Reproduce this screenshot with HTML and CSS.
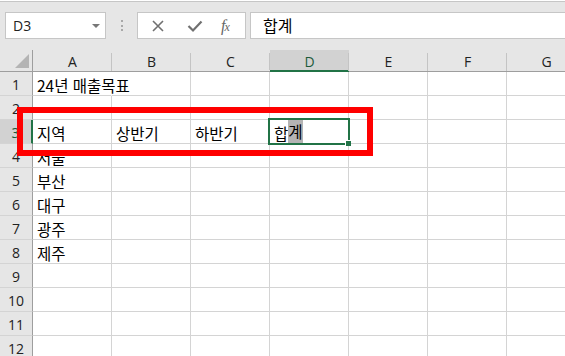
FILE: index.html
```html
<!DOCTYPE html>
<html lang="ko">
<head>
    <meta charset="UTF-8">
    <meta name="viewport" content="width=device-width, initial-scale=1.0">
    <title>24년 매출목표</title>
    <link rel="stylesheet" href="styles.css">
</head>
<body>
    <div class="formula-bar">
        <div class="name-box">
            <span>D3</span>
            <span class="drop"></span>
        </div>
        <div class="grip"><i></i><i></i><i></i></div>
        <div class="fx-buttons">
            <svg class="btn-icon" width="14" height="14" viewBox="0 0 14 14">
                <path d="M2 2 L12 12 M12 2 L2 12" stroke="#707070" stroke-width="1.6" fill="none"/>
            </svg>
            <svg class="btn-icon" width="16" height="14" viewBox="0 0 16 14">
                <path d="M1.5 7 L6 11.5 L14.5 2.5" stroke="#707070" stroke-width="2.2" fill="none"/>
            </svg>
            <span class="fx"><i>f</i><i class="x">x</i></span>
        </div>
        <div class="formula-input">합계</div>
    </div>

    <div class="sheet">
        <div class="row head">
            <div class="corner"><span class="tri"></span></div>
            <div class="ch">A</div>
            <div class="ch">B</div>
            <div class="ch">C</div>
            <div class="ch active">D</div>
            <div class="ch">E</div>
            <div class="ch">F</div>
            <div class="ch">G</div>
        </div>
        <div class="row">
            <div class="rh">1</div>
            <div class="cell spill">24년 매출목표</div>
            <div class="cell"></div><div class="cell"></div><div class="cell"></div>
            <div class="cell"></div><div class="cell"></div><div class="cell"></div>
        </div>
        <div class="row">
            <div class="rh">2</div>
            <div class="cell"></div><div class="cell"></div><div class="cell"></div>
            <div class="cell"></div><div class="cell"></div><div class="cell"></div><div class="cell"></div>
        </div>
        <div class="row">
            <div class="rh active">3</div>
            <div class="cell">지역</div>
            <div class="cell">상반기</div>
            <div class="cell">하반기</div>
            <div class="cell selected">합<span class="sel-text">계</span></div>
            <div class="cell"></div><div class="cell"></div><div class="cell"></div>
        </div>
        <div class="row">
            <div class="rh">4</div>
            <div class="cell">서울</div>
            <div class="cell"></div><div class="cell"></div><div class="cell"></div>
            <div class="cell"></div><div class="cell"></div><div class="cell"></div>
        </div>
        <div class="row">
            <div class="rh">5</div>
            <div class="cell">부산</div>
            <div class="cell"></div><div class="cell"></div><div class="cell"></div>
            <div class="cell"></div><div class="cell"></div><div class="cell"></div>
        </div>
        <div class="row">
            <div class="rh">6</div>
            <div class="cell">대구</div>
            <div class="cell"></div><div class="cell"></div><div class="cell"></div>
            <div class="cell"></div><div class="cell"></div><div class="cell"></div>
        </div>
        <div class="row">
            <div class="rh">7</div>
            <div class="cell">광주</div>
            <div class="cell"></div><div class="cell"></div><div class="cell"></div>
            <div class="cell"></div><div class="cell"></div><div class="cell"></div>
        </div>
        <div class="row">
            <div class="rh">8</div>
            <div class="cell">제주</div>
            <div class="cell"></div><div class="cell"></div><div class="cell"></div>
            <div class="cell"></div><div class="cell"></div><div class="cell"></div>
        </div>
        <div class="row">
            <div class="rh">9</div>
            <div class="cell"></div><div class="cell"></div><div class="cell"></div>
            <div class="cell"></div><div class="cell"></div><div class="cell"></div><div class="cell"></div>
        </div>
        <div class="row">
            <div class="rh">10</div>
            <div class="cell"></div><div class="cell"></div><div class="cell"></div>
            <div class="cell"></div><div class="cell"></div><div class="cell"></div><div class="cell"></div>
        </div>
        <div class="row">
            <div class="rh">11</div>
            <div class="cell"></div><div class="cell"></div><div class="cell"></div>
            <div class="cell"></div><div class="cell"></div><div class="cell"></div><div class="cell"></div>
        </div>
        <div class="row">
            <div class="rh">12</div>
            <div class="cell"></div><div class="cell"></div><div class="cell"></div>
            <div class="cell"></div><div class="cell"></div><div class="cell"></div><div class="cell"></div>
        </div>

        <!-- red highlight box drawn over row 3 -->
        <div class="mark"></div>
    </div>
</body>
</html>
```

FILE: styles.css
```css
/* General */
body {
    margin: 0;
    width: 565px;
    height: 356px;
    overflow: hidden;
    background: #fff;
    font-family: "Noto Sans CJK KR", "Noto Sans", sans-serif;
    color: #000;
}

/* Formula bar */
.formula-bar {
    height: 49px;
    box-sizing: border-box;
    border-top: 1px solid #c6c6c6;
    margin-top: 1px;
    background: #e6e6e6;
    display: flex;
    align-items: flex-start;
    padding-top: 10px;
}

.name-box {
    width: 101px;
    height: 27px;
    box-sizing: border-box;
    margin-left: 5px;
    background: #fff;
    border: 1px solid #c6c6c6;
    display: flex;
    align-items: center;
    justify-content: space-between;
    padding: 0 5px 0 7px;
    font-family: "Open Sans", "Liberation Sans", sans-serif;
    font-size: 14px;
    color: #222;
}

.drop {
    width: 0;
    height: 0;
    border-left: 4px solid transparent;
    border-right: 4px solid transparent;
    border-top: 4px solid #777;
    margin-top: 1px;
}

.grip {
    width: 31px;
    height: 27px;
    display: flex;
    flex-direction: column;
    align-items: center;
    justify-content: center;
    gap: 2.5px;
}

.grip i {
    width: 2px;
    height: 2px;
    background: #a8a8a8;
}

.fx-buttons {
    width: 109px;
    height: 27px;
    box-sizing: border-box;
    background: #fff;
    border: 1px solid #c6c6c6;
    display: flex;
    align-items: center;
    padding-left: 13px;
    gap: 22px;
}

.fx {
    font-family: "Liberation Serif", serif;
    font-size: 16px;
    color: #666;
    margin-left: -4px;
    letter-spacing: -1px;
}

.fx .x {
    font-size: 12px;
}

.formula-input {
    flex: 1;
    height: 27px;
    box-sizing: border-box;
    margin-left: 4px;
    background: #fff;
    border: 1px solid #c6c6c6;
    border-right: none;
    padding-left: 12px;
    font-size: 16px;
    line-height: 24px;
}

/* Sheet grid */
.sheet {
    position: relative;
}

.row {
    display: flex;
    height: 24px;
}

.row.head {
    height: 22px;
}

.corner,
.ch,
.rh {
    background: #e6e6e6;
    box-sizing: border-box;
    font-family: "Open Sans", "Liberation Sans", sans-serif;
    font-size: 14px;
    color: #222;
    display: flex;
    justify-content: center;
    align-items: center;
    flex: none;
}

.corner {
    width: 33px;
    border-right: 1px solid #9e9e9e;
    border-bottom: 1px solid #9e9e9e;
    position: relative;
}

.tri {
    position: absolute;
    right: 3px;
    bottom: 3px;
    width: 0;
    height: 0;
    border-left: 14px solid transparent;
    border-bottom: 14px solid #b4b4b4;
}

.ch {
    width: 79px;
    border-bottom: 1px solid #9e9e9e;
    position: relative;
    padding-top: 2px;
}

.ch::before {
    content: "";
    position: absolute;
    left: -1px;
    top: 3px;
    bottom: 0;
    width: 1px;
    background: #c4c4c4;
}

.corner + .ch::before {
    display: none;
}

.ch.active {
    background: #d2d2d2;
    color: #1d5a3a;
    border-bottom: 2px solid #217346;
}

.rh {
    width: 33px;
    border-right: 1px solid #9e9e9e;
    border-bottom: 1px solid #d4d4d4;
    padding-top: 2px;
}

.rh.active {
    background: #d2d2d2;
    color: #1d5a3a;
    border-right: 2px solid #217346;
}

.cell {
    width: 79px;
    flex: none;
    box-sizing: border-box;
    border-right: 1px solid #d4d4d4;
    border-bottom: 1px solid #d4d4d4;
    font-size: 15.5px;
    white-space: nowrap;
    padding: 2px 0 0 4px;
    display: flex;
    align-items: center;
    overflow: visible;
}

.cell.spill {
    border-right-color: transparent;
}

.cell.selected {
    position: relative;
}

.cell.selected::after {
    content: "";
    position: absolute;
    left: -2px;
    top: -2px;
    right: -2px;
    bottom: -2px;
    border: 2px solid #217346;
}

.cell.selected::before {
    content: "";
    position: absolute;
    right: -3px;
    bottom: -3px;
    width: 5px;
    height: 5px;
    background: #217346;
    border-left: 1px solid #fff;
    border-top: 1px solid #fff;
    z-index: 1;
}

.sel-text {
    background: #b4b4b4;
    height: 23px;
    line-height: 23px;
    margin-top: -2px;
}

/* Red box over row 3 */
.mark {
    position: absolute;
    left: 17px;
    top: 57px;
    width: 356px;
    height: 49px;
    box-sizing: border-box;
    border: 6px solid #ff0000;
}
```
